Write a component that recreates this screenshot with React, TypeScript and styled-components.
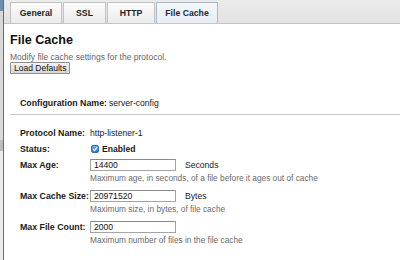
import React from 'react';
import styled, { createGlobalStyle } from 'styled-components';

const GlobalStyle = createGlobalStyle`
    html, body {
        margin: 0;
        padding: 0;
        background: #ffffff;
        font-family: "Liberation Sans", Arial, sans-serif;
        color: #111;
    }
`;

const StyledPage = styled.div`
    display: flex;
    width: 400px;
    height: 260px;
    overflow: hidden;
`;

const StyledSideStrip = styled.div`
    width: 3px;
    flex-shrink: 0;
    background: linear-gradient(to bottom, #6f8fb0 0, #6f8fb0 11px, #d9d9d9 11px, #d9d9d9 140px, #bdbdbd 140px, #bdbdbd 151px, #ececec 151px);
    border-right: 1px solid #6a6a6a;
`;

const StyledMain = styled.div`
    flex: 1;
    display: flex;
    flex-direction: column;
    min-width: 0;
`;

const StyledTabBar = styled.div`
    display: flex;
    align-items: flex-end;
    height: 24px;
    padding-left: 6px;
    background: linear-gradient(to bottom, #ebebeb, #e2e2e2);
    border-bottom: 1px solid #c4c4c4;
    box-sizing: border-box;
`;

const StyledTab = styled.div<{ $active?: boolean; $width: number }>`
    display: flex;
    align-items: center;
    justify-content: center;
    width: ${props => props.$width}px;
    height: 21px;
    box-sizing: border-box;
    margin-right: 1px;
    border: 1px solid ${props => (props.$active ? '#a9b9c9' : '#c2c2c2')};
    border-bottom: none;
    background: ${props => (props.$active
        ? 'linear-gradient(to bottom, #f3f7fb, #e6edf4)'
        : 'linear-gradient(to bottom, #fbfbfb, #ececec)')};
    font-size: 8.7px;
    font-weight: bold;
    color: ${props => (props.$active ? '#1d2a38' : '#222')};
`;

const StyledContent = styled.div`
    padding: 9px 0 0 6px;
`;

const StyledHeading = styled.h1`
    margin: 0;
    font-size: 12.6px;
    font-weight: bold;
    line-height: 15px;
    color: #111;
`;

const StyledDescription = styled.div`
    margin-top: 4px;
    font-size: 8.5px;
    line-height: 10px;
    color: #666;
`;

const StyledButton = styled.button`
    display: block;
    margin: 0;
    padding: 0 3px;
    height: 12px;
    font-family: inherit;
    font-size: 8.5px;
    line-height: 10px;
    color: #111;
    background: linear-gradient(to bottom, #f4f4f4, #d6d6d6);
    border: 1px solid #8e8e8e;
    border-radius: 1px;
`;

const StyledConfigRow = styled.div`
    display: flex;
    align-items: center;
    margin-top: 23px;
    padding-left: 10px;
    height: 12px;
`;

const StyledDivider = styled.hr`
    margin: 5px 0 0;
    border: none;
    border-top: 1px solid #c7c7c7;
`;

const StyledForm = styled.div`
    display: grid;
    grid-template-columns: 70px 1fr;
    padding-left: 10px;
    margin-top: 12px;
    row-gap: 4px;
`;

const StyledLabel = styled.div`
    font-size: 8.8px;
    font-weight: bold;
    line-height: 12px;
    color: #1a1a1a;
    white-space: nowrap;
`;

const StyledConfigLabel = styled(StyledLabel)`
    width: 89px;
`;

const StyledValue = styled.div<{ $bold?: boolean }>`
    font-size: 8.6px;
    font-weight: ${props => (props.$bold ? 'bold' : 'normal')};
    line-height: 12px;
    height: 12px;
    color: #1a1a1a;
    display: flex;
    align-items: center;
`;

const StyledFieldCell = styled.div`
    display: flex;
    flex-direction: column;
`;

const StyledFieldLine = styled.div`
    display: flex;
    align-items: center;
    gap: 9px;
`;

const StyledInput = styled.input`
    width: 86px;
    height: 12px;
    box-sizing: border-box;
    margin: 0;
    padding: 0 3px;
    border: 1px solid #a4a4a4;
    border-top-color: #8a8a8a;
    font-family: inherit;
    font-size: 8.6px;
    color: #111;
    background: #fff;
`;

const StyledUnit = styled.span`
    font-size: 8.6px;
    color: #1a1a1a;
`;

const StyledHelp = styled.div`
    margin: 2px 0 3px;
    font-size: 8.3px;
    line-height: 10px;
    color: #6a6a6a;
`;

const StyledCheck = styled.span`
    display: inline-flex;
    align-items: center;
    justify-content: center;
    width: 8px;
    height: 8px;
    margin: 0 3px 0 1px;
    border-radius: 2px;
    background: linear-gradient(to bottom, #6aaef0, #2a7ad6);
    border: 1px solid #2d6fb8;
    box-sizing: border-box;
`;

type Field = {
    label: string;
    value: string;
    unit?: string;
    help: string;
};

const fields: Field[] = [
    { label: 'Max Age:', value: '14400', unit: 'Seconds', help: 'Maximum age, in seconds, of a file before it ages out of cache' },
    { label: 'Max Cache Size:', value: '20971520', unit: 'Bytes', help: 'Maximum size, in bytes, of file cache' },
    { label: 'Max File Count:', value: '2000', help: 'Maximum number of files in the file cache' },
];

const tabs = [
    { name: 'General', width: 52 },
    { name: 'SSL', width: 43 },
    { name: 'HTTP', width: 48 },
    { name: 'File Cache', width: 62 },
];

const App = () => {
    return (
        <>
            <GlobalStyle />
            <StyledPage>
                <StyledSideStrip />
                <StyledMain>
                    <StyledTabBar>
                        {tabs.map(t => (
                            <StyledTab key={t.name} $width={t.width} $active={t.name === 'File Cache'}>
                                {t.name}
                            </StyledTab>
                        ))}
                    </StyledTabBar>
                    <StyledContent>
                        <StyledHeading>File Cache</StyledHeading>
                        <StyledDescription>Modify file cache settings for the protocol.</StyledDescription>
                        <StyledButton>Load Defaults</StyledButton>
                        <StyledConfigRow>
                            <StyledConfigLabel>Configuration Name:</StyledConfigLabel>
                            <StyledValue>server-config</StyledValue>
                        </StyledConfigRow>
                        <StyledDivider />
                        <StyledForm>
                            <StyledLabel>Protocol Name:</StyledLabel>
                            <StyledValue>http-listener-1</StyledValue>
                            <StyledLabel>Status:</StyledLabel>
                            <StyledValue $bold>
                                <StyledCheck>
                                    <svg width="6" height="6" viewBox="0 0 6 6">
                                        <path d="M1 3.2 L2.4 4.6 L5 1.4" stroke="#fff" strokeWidth="1.2" fill="none" />
                                    </svg>
                                </StyledCheck>
                                Enabled
                            </StyledValue>
                            {fields.map(f => (
                                <React.Fragment key={f.label}>
                                    <StyledLabel>{f.label}</StyledLabel>
                                    <StyledFieldCell>
                                        <StyledFieldLine>
                                            <StyledInput defaultValue={f.value} />
                                            {f.unit && <StyledUnit>{f.unit}</StyledUnit>}
                                        </StyledFieldLine>
                                        <StyledHelp>{f.help}</StyledHelp>
                                    </StyledFieldCell>
                                </React.Fragment>
                            ))}
                        </StyledForm>
                    </StyledContent>
                </StyledMain>
            </StyledPage>
        </>
    );
};

export default App;
